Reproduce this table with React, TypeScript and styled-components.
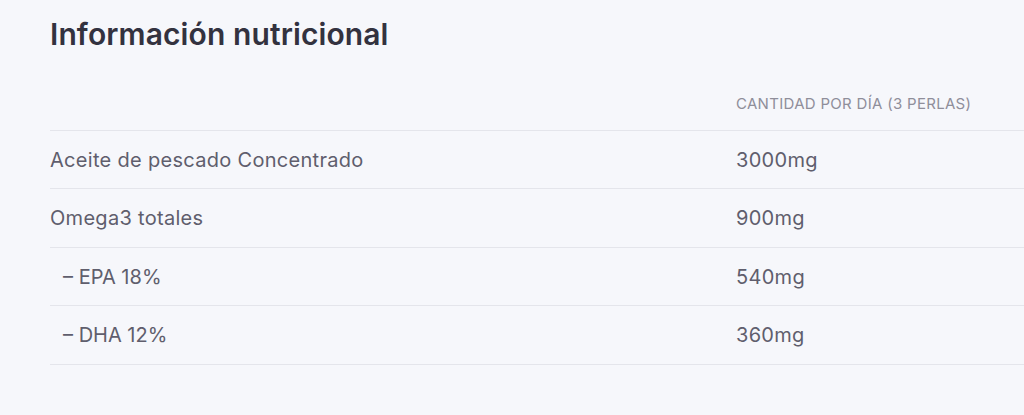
import styled, { createGlobalStyle } from "styled-components";

const GlobalStyle = createGlobalStyle`
  html, body {
    margin: 0;
    padding: 0;
    background: #f6f7fb;
    font-family: Inter, "Noto Sans", sans-serif;
  }
`;

const Section = styled.section`
  padding: 14px 0 0 50px;
  overflow: hidden;
`;

const Title = styled.h2`
  margin: 0;
  font-size: 30px;
  font-weight: 600;
  color: #33323f;
  letter-spacing: 0.1px;
  line-height: 40px;
`;

const Table = styled.div`
  margin-top: 23px;
  display: grid;
  grid-template-columns: 686px 1fr;
  width: 1000px;
`;

interface CellProps {
  indent?: boolean;
  head?: boolean;
}

const Cell = styled.div<CellProps>`
  box-sizing: border-box;
  display: flex;
  align-items: center;
  height: ${p => (p.head ? "53.5px" : "58.5px")};
  border-bottom: 1.5px solid #e4e5eb;
  padding-left: ${p => (p.indent ? "13px" : "0")};
  padding-top: 1px;
  font-size: ${p => (p.head ? "15px" : "20px")};
  letter-spacing: ${p => (p.indent ? "0" : "0.3px")};
  color: ${p => (p.head ? "#8f8e9a" : "#5f5e6d")};
  text-transform: ${p => (p.head ? "uppercase" : "none")};
`;

const rows = [
  { name: "Aceite de pescado Concentrado", value: "3000mg" },
  { name: "Omega3 totales", value: "900mg" },
  { name: "– EPA 18%", value: "540mg", sub: true },
  { name: "– DHA 12%", value: "360mg", sub: true },
];

const App: React.FC = () => {
  return (
    <Section>
      <GlobalStyle />
      <Title>Información nutricional</Title>
      <Table>
        <Cell head />
        <Cell head>Cantidad por día (3 perlas)</Cell>
        {rows.map(r => (
          <>
            <Cell key={r.name} indent={r.sub}>{r.name}</Cell>
            <Cell key={r.value}>{r.value}</Cell>
          </>
        ))}
      </Table>
    </Section>
  );
};

export default App;
